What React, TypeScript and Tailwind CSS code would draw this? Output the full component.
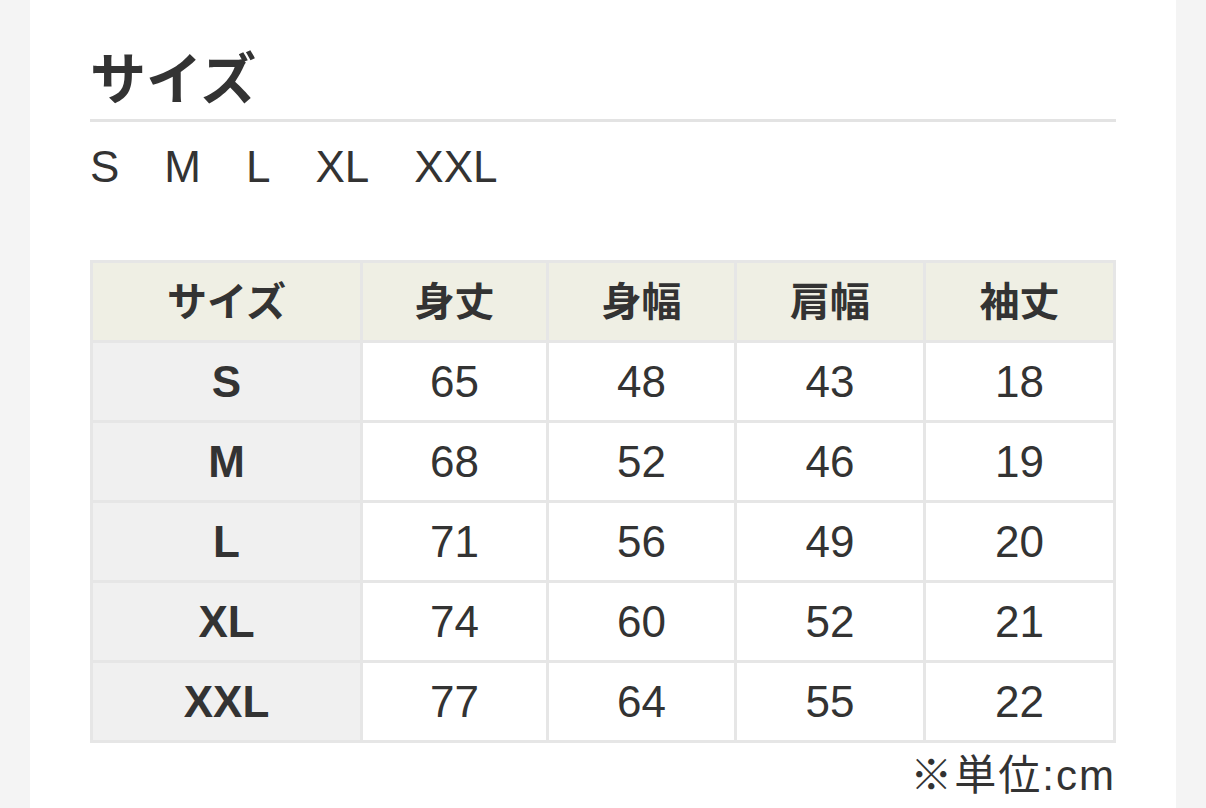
const sizes = ['S', 'M', 'L', 'XL', 'XXL']

const headers = ['サイズ', '身丈', '身幅', '肩幅', '袖丈']

const rows = [
  { size: 'S', values: [65, 48, 43, 18] },
  { size: 'M', values: [68, 52, 46, 19] },
  { size: 'L', values: [71, 56, 49, 20] },
  { size: 'XL', values: [74, 60, 52, 21] },
  { size: 'XXL', values: [77, 64, 55, 22] },
]

const font = { fontFamily: '"Liberation Sans", "Noto Sans CJK JP", sans-serif' }

export default function App() {
  return (
    <div className="min-h-screen bg-[#f4f4f4] px-[30px] text-[#333]" style={font}>
      <div className="min-h-[808px] bg-white px-[60px] pt-[52px] pb-10">
        {/* Title */}
        <h1 className="text-[56px] font-bold leading-none">サイズ</h1>
        <div className="mt-[11px] h-[3px] bg-[#e3e3e3]" />

        {/* Available sizes */}
        <div className="mt-[23px] flex gap-[45px] text-[44px] leading-none">
          {sizes.map((s) => (
            <span key={s}>{s}</span>
          ))}
        </div>

        {/* Size table */}
        <div className="mt-[71px] grid grid-cols-[267px_183px_185px_186px_187px] gap-[3px] border-[3px] border-[#e6e6e6] bg-[#e6e6e6]">
          {headers.map((h) => (
            <div
              key={h}
              className="flex h-[77px] items-center justify-center bg-[#efefe4] text-[40px] font-bold"
            >
              {h}
            </div>
          ))}
          {rows.map((r) => (
            <Row key={r.size} size={r.size} values={r.values} />
          ))}
        </div>

        {/* Unit note */}
        <p className="mt-[12px] text-right text-[42px] leading-none tracking-[2px]">※単位:cm</p>
      </div>
    </div>
  )
}

function Row({ size, values }: { size: string; values: number[] }) {
  return (
    <>
      <div className="flex h-[77px] items-center justify-center bg-[#f0f0f0] text-[44px] font-bold">
        {size}
      </div>
      {values.map((v, i) => (
        <div key={i} className="flex h-[77px] items-center justify-center bg-white text-[44px]">
          {v}
        </div>
      ))}
    </>
  )
}
